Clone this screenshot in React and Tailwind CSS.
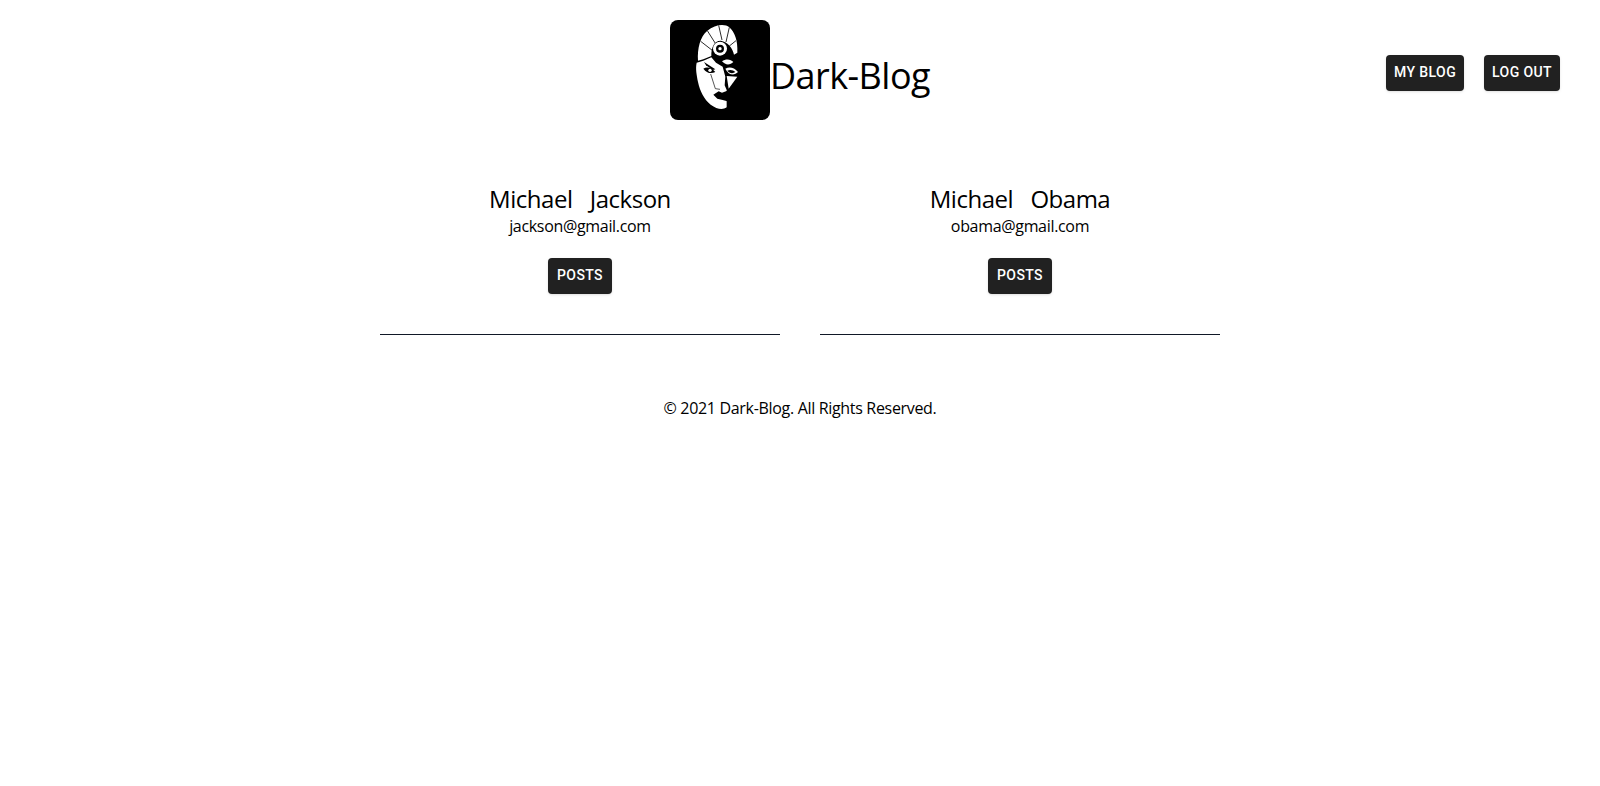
import React from "react";

const sans = "font-['Segoe_UI','Open_Sans','Noto_Sans',sans-serif] tracking-[-0.02em]";

function Btn({ children }) {
  return (
    <button className="h-9 min-w-[64px] rounded bg-[#212121] px-2 pb-0.5 font-['Roboto',sans-serif] text-sm font-medium uppercase tracking-[0.02857em] text-white shadow-sm">
      {children}
    </button>
  );
}

function Logo() {
  return (
    <svg viewBox="0 0 300 300" className="h-[100px] w-[100px] shrink-0 rounded-lg bg-black">
      {/* hair */}
      <path fill="#fff" d="M84 122 C82 86 90 50 112 32 C134 14 164 10 178 22 C194 36 204 62 202 98 L192 104 C188 84 174 66 152 62 C132 62 124 82 124 108 L100 118 Z" />
      {/* hair blades */}
      <path fill="none" stroke="#000" strokeWidth="2.5" d="M92 64 L128 92 M112 32 L136 70 M146 16 L156 60 M178 22 L168 66 M198 62 L178 78" />
      {/* iris ring */}
      <circle cx="150" cy="86" r="21" fill="#fff" />
      <circle cx="150" cy="86" r="12" fill="#000" />
      <circle cx="150" cy="86" r="5" fill="#fff" />
      {/* petal */}
      <path fill="#fff" d="M156 124 C166 116 182 116 190 126 C180 136 166 136 156 124 Z" />
      {/* forehead + face */}
      <path fill="#fff" d="M80 128 L100 122 L124 112 L138 128 L158 140 L166 170 L164 196 L170 210 L170 262 C156 272 140 266 122 254 C102 238 90 214 84 186 C80 164 76 146 80 128 Z" />
      {/* left brow + eye */}
      <path fill="#000" d="M102 126 L136 148 L128 150 L108 136 Z" />
      <path fill="#000" d="M100 146 C110 140 124 142 136 156 C124 162 110 160 100 146 Z" />
      <circle cx="120" cy="151" r="5" fill="#fff" />
      {/* right eye */}
      <path fill="#fff" d="M166 146 C178 140 192 142 204 156 C192 168 176 166 166 146 Z" />
      <path fill="#000" d="M172 152 C180 148 190 150 196 156 C188 162 178 160 172 152 Z" />
      {/* triangle cheek */}
      <path fill="#fff" d="M170 168 L202 170 L176 206 Z" />
      {/* crease line */}
      <path fill="none" stroke="#000" strokeWidth="2" d="M122 162 L136 206 L150 208" />
      {/* lips */}
      <path fill="#000" d="M130 224 L146 214 L156 218 L172 212 L172 244 L158 240 L142 236 Z" />
    </svg>
  );
}

function Person({ name, email }) {
  return (
    <div className="flex h-[152px] flex-col items-center border-b border-[#111827]">
      <h2 className={`${sans} text-2xl leading-8 whitespace-pre text-black`}>{name}</h2>
      <p className={`${sans} mt-px text-base leading-[21px] text-black`}>{email}</p>
      <div className="mt-[21px]">
        <Btn>Posts</Btn>
      </div>
    </div>
  );
}

export default function App() {
  return (
    <div className="min-h-[786px] bg-white">
      <header className="relative flex h-[120px] items-start justify-center pt-5">
        <div className="flex h-[100px] items-center">
          <Logo />
          <span className={`${sans} mt-[11px] text-4xl leading-10 !tracking-[-0.015em] text-black`}>Dark-Blog</span>
        </div>
        <nav className="absolute right-10 top-[55px] flex gap-5">
          <Btn>My Blog</Btn>
          <Btn>Log Out</Btn>
        </nav>
      </header>
      <main className="mx-auto mt-[63px] grid w-[840px] grid-cols-2 gap-10">
        <Person name="Michael   Jackson" email="jackson@gmail.com" />
        <Person name="Michael   Obama" email="obama@gmail.com" />
      </main>
      <footer className={`${sans} mt-[61px] text-center text-base leading-6 text-black`}>
        © 2021 Dark-Blog. All Rights Reserved.
      </footer>
    </div>
  );
}
